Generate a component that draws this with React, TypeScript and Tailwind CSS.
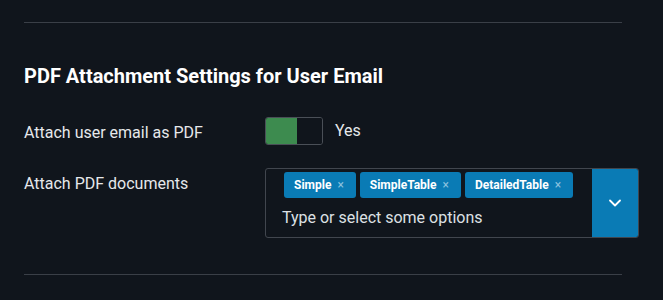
import { ChevronDown } from "lucide-react";

const tags = ["Simple", "SimpleTable", "DetailedTable"];

const App = () => {
  return (
    <div
      className="min-h-[300px] w-full bg-[#10151c] text-[#e6e8eb] pt-[22px]"
      style={{ fontFamily: "Roboto, 'Noto Sans', sans-serif" }}
    >
      <div className="ml-6 w-[598px]">
        <div className="border-t border-[#3a3f47]" />

        <h2 className="mt-[39px] h-[28px] text-[20px] leading-[28px] font-bold text-white">
          PDF Attachment Settings for User Email
        </h2>

        {/* Toggle row */}
        <div className="mt-[27px] flex items-center">
          <div className="w-[241px] shrink-0 pt-[4px] text-[16px] leading-[22px]">Attach user email as PDF</div>
          <div className="flex h-[28px] w-[58px] shrink-0 overflow-hidden rounded-[3px] border border-[#4a4f57]">
            <div className="w-[31px] bg-[#3d8b4f]" />
            <div className="flex-1 bg-[#10151c]" />
          </div>
          <span className="ml-3 text-[16px] leading-[22px]">Yes</span>
        </div>

        {/* Multiselect row */}
        <div className="mt-[23px] flex items-start">
          <div className="w-[241px] shrink-0 pt-[5px] text-[16px] leading-[22px]">Attach PDF documents</div>
          <div className="flex h-[70px] w-[374px] shrink-0 rounded-[3px] border border-[#41464e]">
            <div className="flex flex-1 flex-col pl-[18px] pt-[3px]">
              <div className="flex gap-[4px]">
                {tags.map((t) => (
                  <span
                    key={t}
                    className="flex h-[26px] items-center rounded-[3px] bg-[#0a7bb5] pl-[10px] pr-[12px] text-[12px] font-bold text-white"
                  >
                    {t}
                    <span className="ml-[6px] text-[12px] font-normal text-[#8cc2df]">×</span>
                  </span>
                ))}
              </div>
              <div className="mt-[9px] -ml-[2px] text-[16px] leading-[22px] text-[#dde0e4]">
                Type or select some options
              </div>
            </div>
            <div className="flex w-[46px] items-center justify-center rounded-r-[2px] bg-[#0a7bb5]">
              <ChevronDown size={20} strokeWidth={2.2} color="#ffffff" />
            </div>
          </div>
        </div>

        <div className="mt-[36px] border-t border-[#3a3f47]" />
      </div>
    </div>
  );
};

export default App;
